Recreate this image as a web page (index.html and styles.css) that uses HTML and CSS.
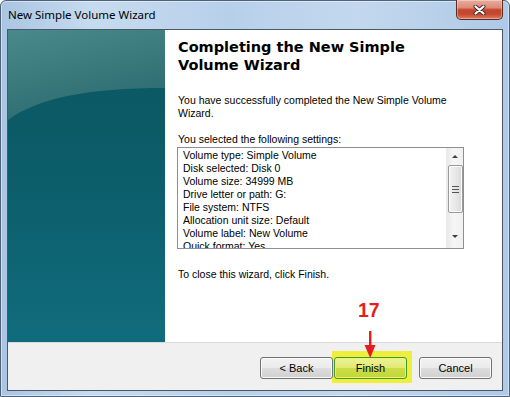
FILE: index.html
```html
<!DOCTYPE html>
<html>
<head>
<meta charset="utf-8">
<link rel="stylesheet" href="styles.css">
</head>
<body>
<div class="window">
  <div class="titlebar">
    <span class="title">New Simple Volume Wizard</span>
    <div class="close">
      <svg width="13" height="10" viewBox="0 0 13 10">
        <path d="M2.5,1.5 L10.5,8.5 M10.5,1.5 L2.5,8.5" stroke="#3b2a2a" stroke-width="4" stroke-linecap="round"/>
        <path d="M2.5,1.5 L10.5,8.5 M10.5,1.5 L2.5,8.5" stroke="#ffffff" stroke-width="2.2" stroke-linecap="round"/>
      </svg>
    </div>
  </div>
  <div class="client">
    <div class="main">
      <div class="banner">
        <svg width="157" height="312" viewBox="0 0 157 312">
          <defs>
            <linearGradient id="low" x1="0" y1="0" x2="0" y2="1">
              <stop offset="0" stop-color="#0a5660"/>
              <stop offset="0.5" stop-color="#0c5e6b"/>
              <stop offset="1" stop-color="#106c7d"/>
            </linearGradient>
            <linearGradient id="top" x1="0" y1="0" x2="0.4" y2="1">
              <stop offset="0" stop-color="#4a898b"/>
              <stop offset="1" stop-color="#2c6c70"/>
            </linearGradient>
          </defs>
          <rect width="157" height="312" fill="url(#low)"/>
          <path d="M0,90 C30,68 80,58 157,58 L157,0 L0,0 Z" fill="url(#top)"/>
        </svg>
      </div>
      <div class="content">
        <h1 class="heading">Completing the New Simple<br>Volume Wizard</h1>
        <p class="intro">You have successfully completed the New Simple Volume<br>Wizard.</p>
        <p class="label">You selected the following settings:</p>
        <div class="listbox">
          <div class="items">
            <div>Volume type: Simple Volume</div>
            <div>Disk selected: Disk 0</div>
            <div>Volume size: 34999 MB</div>
            <div>Drive letter or path: G:</div>
            <div>File system: NTFS</div>
            <div>Allocation unit size: Default</div>
            <div>Volume label: New Volume</div>
            <div>Quick format: Yes</div>
          </div>
          <div class="scrollbar">
            <div class="arrow up"></div>
            <div class="thumb"><span></span><span></span><span></span></div>
            <div class="arrow down"></div>
          </div>
        </div>
        <p class="closing">To close this wizard, click Finish.</p>
      </div>
    </div>
    <div class="footer">
      <button class="btn back">&lt; Back</button>
      <button class="btn finish">Finish</button>
      <button class="btn cancel">Cancel</button>
    </div>
  </div>
  <div class="step-number">17</div>
  <svg class="step-arrow" width="14" height="28" viewBox="0 0 14 28">
    <rect x="6" y="0" width="2.4" height="16" fill="#e41f1b"/>
    <path d="M1.5,14 L12.5,14 L7.2,27 Z" fill="#e41f1b"/>
  </svg>
</div>
</body>
</html>
```

FILE: styles.css
```css
* { box-sizing: border-box; }

body {
  margin: 0;
  width: 510px;
  height: 397px;
  overflow: hidden;
  font-family: "Liberation Sans", Arial, sans-serif;
  background: #ffffff;
}

.window {
  position: relative;
  width: 510px;
  height: 397px;
  border: 1px solid #4f6378;
  border-radius: 6px 6px 0 0;
  padding: 0 6px 5px 6px;
  display: flex;
  flex-direction: column;
  background: linear-gradient(to right, #aac5e3 0%, #c6dbef 18%, #b7d0ea 45%, #c3d8ee 70%, #aec9e6 100%);
  box-shadow: inset 0 0 0 1px rgba(255,255,255,0.45);
}

.titlebar {
  height: 28px;
  display: flex;
  justify-content: space-between;
  align-items: flex-start;
}

.title {
  margin: 7px 0 0 1px;
  font-family: "Noto Sans", "Open Sans", sans-serif;
  font-size: 11.5px;
  line-height: 14px;
  color: #000;
}

.close {
  width: 47px;
  height: 20px;
  margin: -1px 0 0 0;
  border: 1px solid #5a2b23;
  border-top: none;
  border-radius: 0 0 5px 5px;
  display: flex;
  align-items: center;
  justify-content: center;
  background: linear-gradient(#e9ac9d 0%, #dd8b78 40%, #c4442c 52%, #c5492f 75%, #dc7d60 100%);
  box-shadow: inset 0 0 0 1px rgba(255,255,255,0.35);
}

.client {
  flex: 1;
  border: 1px solid #4a5968;
  background: #ffffff;
  display: flex;
  flex-direction: column;
}

.main {
  height: 312px;
  display: flex;
}

.banner {
  width: 157px;
  flex: none;
  line-height: 0;
}

.content {
  flex: 1;
  padding: 8px 12px 0 13px;
}

.heading {
  margin: 0;
  font-family: "DejaVu Sans", Verdana, sans-serif;
  font-weight: bold;
  font-size: 14.5px;
  line-height: 18px;
  color: #000;
}

.intro, .label, .closing {
  margin: 0;
  font-size: 10.5px;
  line-height: 13px;
  color: #000;
}

.intro { margin-top: 20px; }
.label { margin-top: 13px; }
.closing { margin-top: 19px; }

.listbox {
  margin: 1px 0 0 -1px;
  width: 287px;
  height: 102px;
  border: 1px solid #8c9096;
  display: flex;
  overflow: hidden;
}

.items {
  flex: 1;
  padding: 1px 0 0 5px;
  font-size: 10.5px;
  line-height: 13px;
  color: #000;
  overflow: hidden;
}

.scrollbar {
  width: 17px;
  flex: none;
  display: flex;
  flex-direction: column;
  align-items: center;
  background: linear-gradient(to right, #e9e9e9, #f6f6f6 40%, #f0f0f0);
  border-left: 1px solid #ececec;
}

.arrow {
  width: 0;
  height: 0;
  border-left: 3px solid transparent;
  border-right: 3px solid transparent;
}

.arrow.up {
  margin-top: 7px;
  border-bottom: 3px solid #3f3f3f;
}

.arrow.down {
  margin-top: 22px;
  border-top: 3px solid #3f3f3f;
}

.thumb {
  margin-top: 7px;
  width: 15px;
  height: 48px;
  border: 1px solid #9a9a9a;
  border-radius: 2px;
  background: linear-gradient(to right, #f3f3f3, #e8e8e8 50%, #d9d9d9);
  box-shadow: inset 0 0 0 1px #fbfbfb;
  display: flex;
  flex-direction: column;
  align-items: center;
  justify-content: center;
  gap: 2px;
}

.thumb span {
  display: block;
  width: 7px;
  height: 1px;
  background: #555;
}

.footer {
  position: relative;
  z-index: 0;
  flex: 1;
  border-top: 1px solid #d9d9d9;
  background: #f0f0f0;
  display: flex;
  justify-content: flex-end;
  align-items: flex-start;
  padding: 14px 10px 0 0;
}

.btn {
  width: 73px;
  height: 22px;
  padding: 0;
  border: 1px solid #707070;
  border-radius: 3px;
  background: linear-gradient(#f2f2f2 0%, #ebebeb 48%, #dddddd 52%, #cfcfcf 100%);
  box-shadow: inset 0 0 0 1px #fbfbfb;
  font-family: "Liberation Sans", Arial, sans-serif;
  font-size: 11px;
  color: #000;
}

.finish {
  position: relative;
  margin-left: 1px;
  border-color: #3f9a26;
  background: linear-gradient(#eef39a 0%, #e1ea70 48%, #ccdc46 52%, #c2d73a 100%);
  box-shadow: inset 0 0 0 1px #e9f27c;
}

.finish::before {
  content: "";
  position: absolute;
  top: -7px;
  bottom: -5px;
  left: -3px;
  right: -6px;
  z-index: -1;
  background: #eeee3c;
}

.cancel { margin-left: 12px; }

.step-number {
  position: absolute;
  left: 357px;
  top: 298px;
  font-family: "Liberation Sans", Arial, sans-serif;
  font-weight: bold;
  font-size: 19.5px;
  line-height: 22px;
  color: #e41f1b;
}

.step-arrow {
  position: absolute;
  left: 362px;
  top: 330px;
}
```
